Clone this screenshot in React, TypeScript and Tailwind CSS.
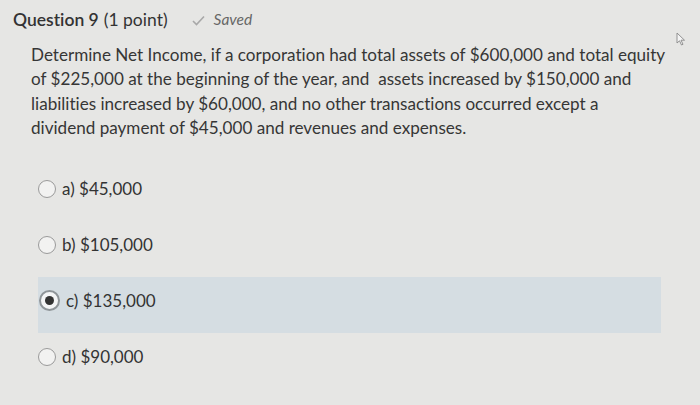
import React from 'react';

const options = [
  { label: 'a) $45,000', selected: false },
  { label: 'b) $105,000', selected: false },
  { label: 'c) $135,000', selected: true },
  { label: 'd) $90,000', selected: false },
];

const lines = [
  'Determine Net Income, if a corporation had total assets of $600,000 and total equity',
  'of $225,000 at the beginning of the year, and\u00a0 assets increased by $150,000 and',
  'liabilities increased by $60,000, and no other transactions occurred except a',
  'dividend payment of $45,000 and revenues and expenses.',
];

const Radio: React.FC<{ selected: boolean }> = ({ selected }) => {
  if (selected) {
    return (
      <span className="w-[21px] h-[21px] rounded-full bg-[#f4f5f6] border-2 border-[#8f9599] flex items-center justify-center shrink-0">
        <span className="w-[9px] h-[9px] rounded-full bg-[#333]" />
      </span>
    );
  }
  return <span className="w-[18px] h-[18px] rounded-full bg-[#f2f2f1] border border-[#9a9a9a] shrink-0" />;
};

const App: React.FC = () => {
  return (
    <div
      className="relative w-[700px] h-[405px] overflow-hidden bg-[#e6e6e4] text-[#333] [font-variant-ligatures:none]"
      style={{ fontFamily: 'Lato, "Open Sans", sans-serif' }}
    >
      {/* Header */}
      <div className="flex items-center h-[20px] mt-[10px] pl-[13px]">
        <span className="text-[17.5px] font-semibold">Question 9</span>
        <span className="text-[17.5px] ml-[5px]">(1 point)</span>
        <svg className="ml-[24px] w-[13px] h-[11px]" viewBox="0 0 13 11" fill="none">
          <path d="M1 6 L4.5 9.5 L12 1.5" stroke="#a8a8a8" strokeWidth="1.6" />
        </svg>
        <span className="ml-[9px] text-[15.5px] italic text-[#666]">Saved</span>
      </div>

      {/* Question */}
      <div className="mt-[13px] pl-[31px] text-[17.1px] leading-[24.4px] text-[#363636] whitespace-nowrap">
        {lines.map((l) => (
          <div key={l}>{l}</div>
        ))}
      </div>

      {/* Options */}
      <div className="mt-[24px] ml-[38px] w-[623px] flex flex-col">
        {options.map((o) => (
          <div
            key={o.label}
            className={`h-[56px] flex items-center pb-[8px] ${o.selected ? 'bg-[#d5dde2] pl-[1px]' : ''}`}
          >
            <Radio selected={o.selected} />
            <span className={`text-[17px] ${o.selected ? 'ml-[6px]' : 'ml-[6px]'}`}>{o.label}</span>
          </div>
        ))}
      </div>

      {/* Cursor */}
      <svg className="absolute left-[676px] top-[32px] w-[10px] h-[14px]" viewBox="0 0 10 14" fill="none">
        <path d="M1 1 L1 11 L3.5 8.8 L5.5 13 L7 12.3 L5 8.2 L8.5 8.2 Z" fill="#f4f4f4" stroke="#888" strokeWidth="0.9" />
      </svg>
    </div>
  );
};

export default App;
